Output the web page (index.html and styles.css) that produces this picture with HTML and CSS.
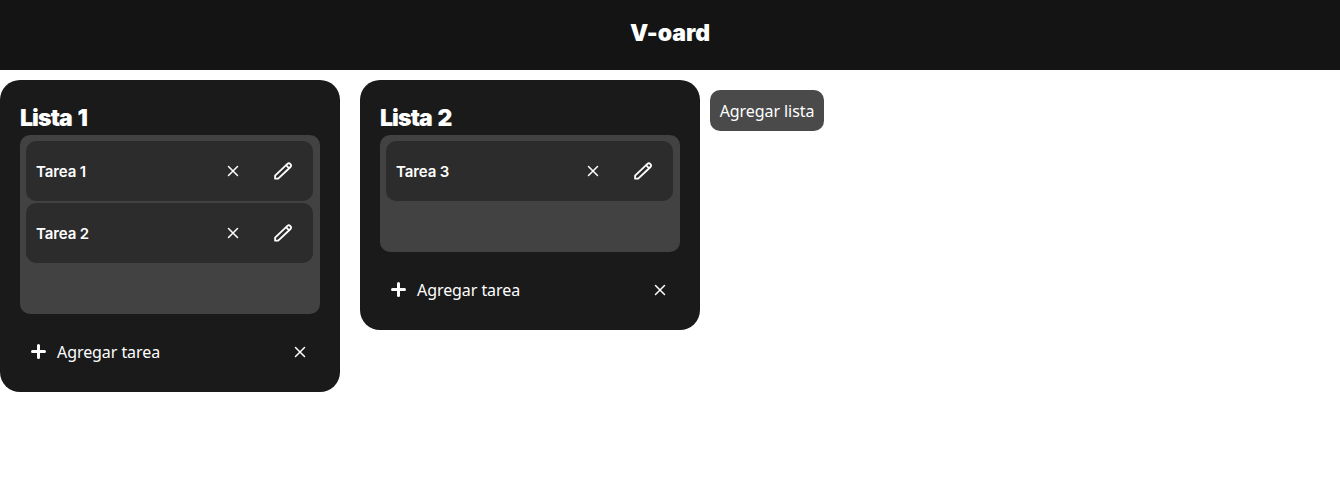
FILE: index.html
```html
<!DOCTYPE html>
<html lang="es">
<head>
<meta charset="utf-8">
<title>V-oard</title>
<link rel="stylesheet" href="styles.css">
</head>
<body>
<svg class="defs" width="0" height="0">
  <symbol id="close" viewBox="0 0 12 12"><path d="M1.5 1.5 10.5 10.5M10.5 1.5 1.5 10.5" fill="none" stroke="currentColor" stroke-width="1.5" stroke-linecap="round"/></symbol>
  <symbol id="pencil" viewBox="0 0 20 20"><path d="M2.1 17.7V14.6L14.4 2.9A2.2 2.2 0 0 1 17.5 6L5.2 17.7ZM13 4.2 16.2 7.4" fill="none" stroke="currentColor" stroke-width="1.8" stroke-linejoin="round" stroke-linecap="round"/></symbol>
  <symbol id="plus" viewBox="0 0 15 15"><path d="M7.5 1.5V13.5M1.5 7.5H13.5" fill="none" stroke="currentColor" stroke-width="3" stroke-linecap="round"/></symbol>
</svg>
<header class="header"><h1 class="brand">V-oard</h1></header>
<main class="board">
  <section class="list">
    <h2 class="list-title">Lista 1</h2>
    <div class="tasks">
      <article class="task"><span class="task-name">Tarea 1</span><svg class="close"><use href="#close"/></svg><svg class="pencil"><use href="#pencil"/></svg></article>
      <article class="task"><span class="task-name">Tarea 2</span><svg class="close"><use href="#close"/></svg><svg class="pencil"><use href="#pencil"/></svg></article>
    </div>
    <footer class="list-footer"><svg class="plus"><use href="#plus"/></svg><span class="add-task">Agregar tarea</span><svg class="close"><use href="#close"/></svg></footer>
  </section>
  <section class="list">
    <h2 class="list-title">Lista 2</h2>
    <div class="tasks">
      <article class="task"><span class="task-name">Tarea 3</span><svg class="close"><use href="#close"/></svg><svg class="pencil"><use href="#pencil"/></svg></article>
    </div>
    <footer class="list-footer"><svg class="plus"><use href="#plus"/></svg><span class="add-task">Agregar tarea</span><svg class="close"><use href="#close"/></svg></footer>
  </section>
  <button class="add-list">Agregar lista</button>
</main>
</body>
</html>
```
FILE: styles.css
```css
* { box-sizing: border-box; }
body { margin: 0; background: #fff; color: #fff; font-family: "Noto Sans", sans-serif; }
.defs { position: absolute; }
.header { height: 70px; background: #141414; display: flex; justify-content: center; padding-top: 16px; }
.brand, .list-title { margin: 0; font: 900 23px/34px Inter, "Noto Sans", sans-serif; letter-spacing: 0; white-space: nowrap; }
.board { display: flex; align-items: flex-start; padding-top: 10px; }
.list { width: 340px; margin-right: 20px; padding: 20px 20px 10px; border-radius: 20px; background: #1a1a1a; }
.list-title { height: 35px; line-height: 37px; letter-spacing: -0.9px; word-spacing: 2px; }
.tasks { display: flex; flex-direction: column; gap: 2px; padding: 6px 7px 51px 6px; border-radius: 10px; background: #424242; }
.task { display: flex; align-items: center; height: 60px; padding: 0 20px 0 10px; border-radius: 10px; background: #2c2c2c; }
.task-name { flex: 1; padding-top: 2px; font: 600 15px/24px Inter, "Noto Sans", sans-serif; letter-spacing: -0.1px; white-space: nowrap; }
.close { width: 12px; height: 12px; }
.pencil { width: 20px; height: 20px; margin-left: 34px; }
.list-footer { display: flex; align-items: center; height: 68px; padding: 8px 14px 0 11px; }
.plus { width: 15px; height: 15px; margin: 0 11px 1px 0; }
.add-task { flex: 1; font-size: 16px; line-height: 22px; letter-spacing: -0.07px; white-space: nowrap; }
.add-list { width: 114px; height: 41px; margin: 10px 0 0 -10px; padding: 0; border: 0; border-radius: 10px; background: #4a4a4a; color: #fff; font: 16px/22px "Noto Sans", sans-serif; letter-spacing: -0.07px; white-space: nowrap; }
```
